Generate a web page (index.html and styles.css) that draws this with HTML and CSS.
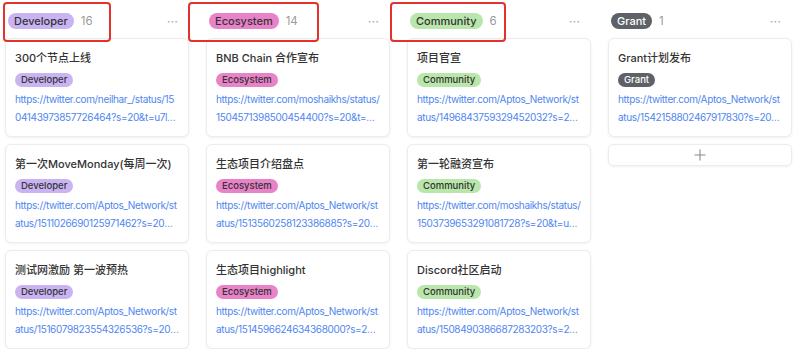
FILE: index.html
```html
<!DOCTYPE html>
<html lang="en">
<head>
    <meta charset="UTF-8">
    <meta name="viewport" content="width=device-width, initial-scale=1.0">
    <title>Board</title>
  <link rel="stylesheet" href="styles.css">
</head>
<body>
    <div class="board">

        <!-- red annotation boxes -->
        <div class="mark mark1"></div>
        <div class="mark mark2"></div>
        <div class="mark mark3"></div>

        <section class="column">
            <div class="col-head">
                <span class="pill developer">Developer</span>
                <span class="count">16</span>
                <span class="more">···</span>
            </div>
            <div class="card">
                <div class="title">300个节点上线</div>
                <span class="tag developer">Developer</span>
                <a class="link">https://twitter.com/neilhar_/status/1504143973857726464?s=20&amp;t=u7lxQ</a>
            </div>
            <div class="card">
                <div class="title">第一次MoveMonday(每周一次)</div>
                <span class="tag developer">Developer</span>
                <a class="link">https://twitter.com/Aptos_Network/status/1511026690125971462?s=20&amp;t=ab</a>
            </div>
            <div class="card">
                <div class="title">测试网激励 第一波预热</div>
                <span class="tag developer">Developer</span>
                <a class="link">https://twitter.com/Aptos_Network/status/1516079823554326536?s=20&amp;t=ab</a>
            </div>
        </section>

        <section class="column">
            <div class="col-head">
                <span class="pill ecosystem">Ecosystem</span>
                <span class="count">14</span>
                <span class="more">···</span>
            </div>
            <div class="card">
                <div class="title">BNB Chain 合作宣布</div>
                <span class="tag ecosystem">Ecosystem</span>
                <a class="link">https://twitter.com/moshaikhs/status/1504571398500454400?s=20&amp;t=abcdef</a>
            </div>
            <div class="card">
                <div class="title">生态项目介绍盘点</div>
                <span class="tag ecosystem">Ecosystem</span>
                <a class="link">https://twitter.com/Aptos_Network/status/1513560258123386885?s=20&amp;t=ab</a>
            </div>
            <div class="card">
                <div class="title">生态项目highlight</div>
                <span class="tag ecosystem">Ecosystem</span>
                <a class="link">https://twitter.com/Aptos_Network/status/1514596624634368000?s=20&amp;t=ab</a>
            </div>
        </section>

        <section class="column">
            <div class="col-head">
                <span class="pill community">Community</span>
                <span class="count">6</span>
                <span class="more">···</span>
            </div>
            <div class="card">
                <div class="title">项目官宣</div>
                <span class="tag community">Community</span>
                <a class="link">https://twitter.com/Aptos_Network/status/1496843759329452032?s=20&amp;t=ab</a>
            </div>
            <div class="card">
                <div class="title">第一轮融资宣布</div>
                <span class="tag community">Community</span>
                <a class="link">https://twitter.com/moshaikhs/status/1503739653291081728?s=20&amp;t=uabc</a>
            </div>
            <div class="card">
                <div class="title">Discord社区启动</div>
                <span class="tag community">Community</span>
                <a class="link">https://twitter.com/Aptos_Network/status/1508490386687283203?s=20&amp;t=ab</a>
            </div>
        </section>

        <section class="column">
            <div class="col-head">
                <span class="pill grant">Grant</span>
                <span class="count">1</span>
                <span class="more">···</span>
            </div>
            <div class="card">
                <div class="title">Grant计划发布</div>
                <span class="tag grant">Grant</span>
                <a class="link">https://twitter.com/Aptos_Network/status/1542158802467917830?s=20&amp;t=ab</a>
            </div>
            <div class="add">
                <svg width="12" height="12" viewBox="0 0 12 12"><path d="M6 0.5v11M0.5 6h11" stroke="#8a8a8a" stroke-width="1.1" fill="none"/></svg>
            </div>
        </section>

    </div>
</body>
</html>
```

FILE: styles.css
```css
body{
    margin: 0;
    padding: 0;
    background-color: #fff;
    font-family: Inter, 'Noto Sans CJK SC', sans-serif;
    color: #333;
}
.board{
    position: relative;
    display: flex;
    gap: 17px;
    padding-left: 5px;
}
.column{
    width: 184px;
    display: flex;
    flex-direction: column;
    gap: 7px;
}
.col-head{
    height: 31px;
    display: flex;
    align-items: center;
    padding: 0 3px;
    margin-top: 5px;
    margin-bottom: -5px;
}
.pill{
    font-size: 11px;
    font-weight: 500;
    line-height: 16px;
    padding: 0 6px;
    border-radius: 8px;
    color: #333;
}
.count{
    margin-left: 7px;
    font-size: 11.5px;
    color: #9a9a9a;
}
.more{
    margin-left: auto;
    margin-right: 8px;
    color: #aaa;
    font-size: 13px;
    line-height: 10px;
    letter-spacing: 0;
}

.developer{ background-color: #c9b3f3; }
.ecosystem{ background-color: #e882c9; }
.community{ background-color: #b9e6aa; }
.grant{ background-color: #5e6167; color: #fff; }

.card{
    height: 99px;
    box-sizing: border-box;
    padding: 11px 9px 10px;
    border: 1px solid #ececec;
    border-radius: 6px;
    background-color: #fff;
    box-shadow: 0 1px 3px rgba(0, 0, 0, 0.06);
}
.title{
    font-size: 11px;
    font-weight: 500;
    line-height: 17px;
    color: #333;
    white-space: nowrap;
}
.tag{
    display: inline-block;
    margin-top: 6px;
    font-size: 9.5px;
    font-weight: 500;
    line-height: 14px;
    padding: 0 6px;
    border-radius: 7px;
}
.link{
    display: -webkit-box;
    -webkit-box-orient: vertical;
    -webkit-line-clamp: 2;
    overflow: hidden;
    margin-top: 3px;
    font-size: 10px;
    letter-spacing: -0.35px;
    line-height: 18px;
    color: #4f86f0;
    word-break: break-all;
}
.add{
    height: 22px;
    box-sizing: border-box;
    border: 1px solid #ececec;
    border-radius: 5px;
    box-shadow: 0 1px 3px rgba(0, 0, 0, 0.06);
    display: flex;
    align-items: center;
    justify-content: center;
}

.mark{
    position: absolute;
    top: 2px;
    height: 40px;
    border: 2.5px solid #e4312b;
    border-radius: 4px;
    box-sizing: border-box;
}
.mark1{ left: 3px; width: 108px; }
.mark2{ left: 188px; width: 131px; }
.mark3{ left: 390px; width: 116px; }
```
